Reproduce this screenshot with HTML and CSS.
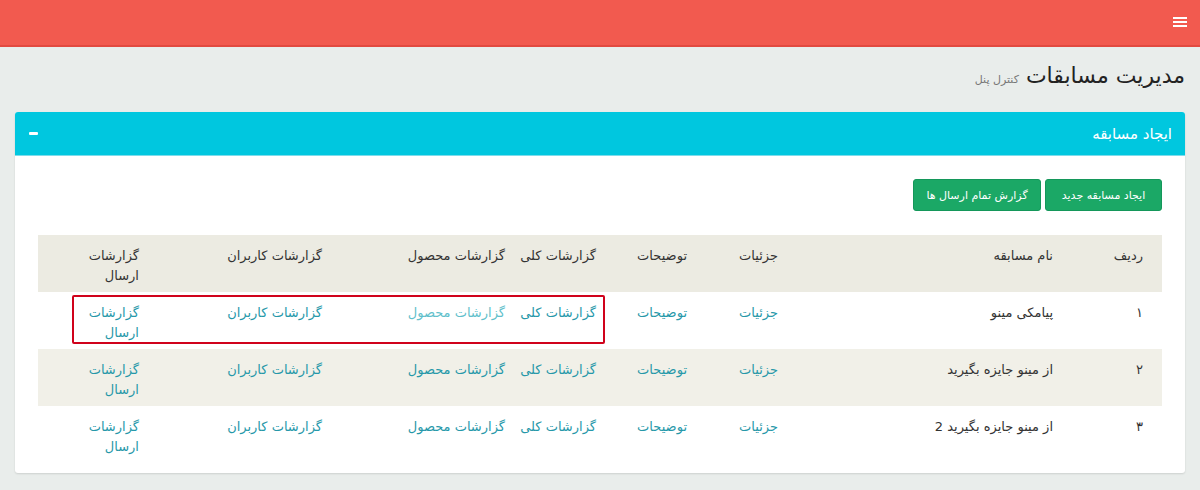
FILE: index.html
```html
<!DOCTYPE html>
<html lang="fa" dir="rtl">
<head>
<meta charset="utf-8">
<title>مدیریت مسابقات</title>
<link rel="stylesheet" href="styles.css">
</head>
<body>
<header class="topbar">
  <span class="menu-toggle" aria-label="menu">
    <span class="bar"></span><span class="bar"></span><span class="bar"></span>
  </span>
</header>
<main class="content">
  <h1 class="page-title">مدیریت مسابقات <small>کنترل پنل</small></h1>
  <section class="box">
    <div class="box-header">
      <h3 class="box-title">ایجاد مسابقه</h3>
      <span class="collapse-btn"></span>
    </div>
    <div class="box-body">
      <div class="actions">
        <a class="btn" href="#">ایجاد مسابقه جدید</a>
        <a class="btn" href="#">گزارش تمام ارسال ها</a>
      </div>
      <div class="table-wrap">
        <table class="grid">
          <colgroup>
            <col class="c1"><col class="c2"><col class="c3"><col class="c4"><col class="c5"><col class="c6"><col class="c7"><col class="c8">
          </colgroup>
          <thead>
            <tr>
              <th class="idx">ردیف</th>
              <th>نام مسابقه</th>
              <th>جزئیات</th>
              <th>توضیحات</th>
              <th>گزارشات کلی</th>
              <th>گزارشات محصول</th>
              <th>گزارشات کاربران</th>
              <th class="last">گزارشات ارسال</th>
            </tr>
          </thead>
          <tbody>
            <tr>
              <td class="idx">۱</td>
              <td>پیامکی مینو</td>
              <td><a href="#">جزئیات</a></td>
              <td><a href="#">توضیحات</a></td>
              <td><a href="#">گزارشات کلی</a></td>
              <td><a href="#" class="hover">گزارشات محصول</a></td>
              <td><a href="#">گزارشات کاربران</a></td>
              <td class="last"><a href="#">گزارشات ارسال</a></td>
            </tr>
            <tr class="odd">
              <td class="idx">۲</td>
              <td>از مینو جایزه بگیرید</td>
              <td><a href="#">جزئیات</a></td>
              <td><a href="#">توضیحات</a></td>
              <td><a href="#">گزارشات کلی</a></td>
              <td><a href="#">گزارشات محصول</a></td>
              <td><a href="#">گزارشات کاربران</a></td>
              <td class="last"><a href="#">گزارشات ارسال</a></td>
            </tr>
            <tr>
              <td class="idx">۳</td>
              <td>از مینو جایزه بگیرید 2</td>
              <td><a href="#">جزئیات</a></td>
              <td><a href="#">توضیحات</a></td>
              <td><a href="#">گزارشات کلی</a></td>
              <td><a href="#">گزارشات محصول</a></td>
              <td><a href="#">گزارشات کاربران</a></td>
              <td class="last"><a href="#">گزارشات ارسال</a></td>
            </tr>
          </tbody>
        </table>
        <div class="highlight"></div>
      </div>
    </div>
  </section>
</main>
</body>
</html>
```

FILE: styles.css
```css
* { box-sizing: border-box; }
html, body { margin: 0; padding: 0; }
body {
  background: #e9edeb;
  font-family: "DejaVu Sans", "Noto Sans", sans-serif;
  font-size: 12px;
  color: #333;
  width: 1200px;
  height: 490px;
  overflow: hidden;
}
.topbar {
  height: 47px;
  background: #f25a4f;
  border-bottom: 2px solid #e24a40;
  display: flex;
  align-items: center;
  padding: 0 13px;
}
.menu-toggle {
  display: flex;
  flex-direction: column;
  gap: 2px;
  width: 14px;
  margin-top: -1px;
}
.menu-toggle .bar {
  display: block;
  height: 2px;
  background: #fff;
}
.content {
  padding: 14px 15px 0;
}
.page-title {
  margin: 0 0 17px;
  font-size: 22px;
  font-weight: normal;
  color: #222;
  line-height: 30px;
}
.page-title small {
  font-size: 11px;
  color: #777;
}
.box {
  background: #fff;
  border-radius: 3px;
  box-shadow: 0 1px 2px rgba(0,0,0,0.12);
  overflow: hidden;
}
.box-header {
  background: #00c7df;
  height: 44px;
  display: flex;
  align-items: center;
  justify-content: space-between;
  padding: 0 13px 0 14px;
  border-bottom: 1px solid #7ddceb;
}
.box-title {
  margin: 0;
  font-size: 15px;
  font-weight: normal;
  color: #fff;
}
.collapse-btn {
  display: block;
  width: 9px;
  height: 3px;
  background: #fff;
  border-radius: 1px;
}
.box-body {
  padding: 23px 23px 10px;
}
.actions {
  display: flex;
  gap: 4px;
  margin-bottom: 24px;
}
.btn {
  display: inline-flex;
  align-items: center;
  justify-content: center;
  height: 32px;
  padding: 0;
  background: #1ba866;
  border: 1px solid #14975a;
  border-radius: 3px;
  color: #fff;
  text-decoration: none;
  font-size: 11px;
  font-weight: normal;
  white-space: nowrap;
}
.btn:first-child { width: 117px; }
.btn:nth-child(2) { width: 128px; }
.table-wrap { position: relative; }
.grid {
  width: 100%;
  table-layout: fixed;
  border-collapse: collapse;
}
.grid .c1 { width: 99px; }
.grid .c2 { width: 275px; }
.grid .c3, .grid .c4, .grid .c5 { width: 91px; }
.grid .c6, .grid .c7 { width: 183px; }
.grid .c8 { width: 111px; }
.grid th, .grid td {
  text-align: right;
  vertical-align: top;
  padding: 11px 10px 6px 10px;
  line-height: 20px;
  height: 57px;
  font-weight: normal;
  font-size: 13px;
  white-space: nowrap;
}
.grid th.last, .grid td.last { white-space: normal; }
.grid th { color: #333; }
.grid th.idx, .grid td.idx { padding-right: 19px; }
.grid th.last, .grid td.last { padding-left: 42px; }
.grid thead tr { background: #ecebe2; }
.grid tr.odd { background: #f1f0e8; }
.grid a { color: #2698a9; text-decoration: none; }
.grid a.hover { color: #61bfcb; }
.highlight {
  position: absolute;
  left: 34px;
  top: 60px;
  width: 533px;
  height: 49px;
  border: 2px solid #d0021b;
  border-radius: 2px;
  pointer-events: none;
}
```
